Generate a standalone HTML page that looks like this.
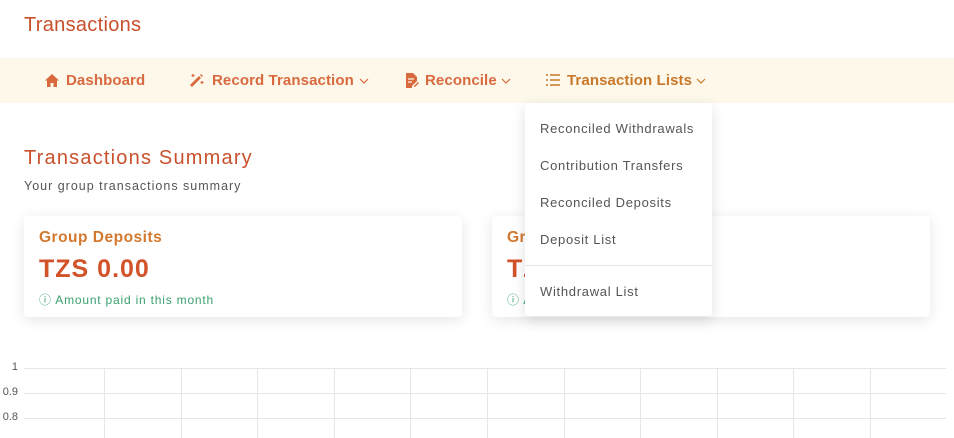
<!DOCTYPE html>
<html><head><meta charset="utf-8"><style>
*{margin:0;padding:0;box-sizing:border-box}
body{width:954px;height:438px;overflow:hidden;background:#fff;font-family:"Liberation Sans",sans-serif;position:relative}
.a{position:absolute}
.title{left:24px;top:14px;font-size:20px;color:#c9502c;letter-spacing:0.3px}
.nav{left:0;top:58px;width:954px;height:45px;background:#fdf8ea}
.ni{top:72px;font-size:15px;font-weight:bold;color:#d9693f;white-space:nowrap;letter-spacing:0.1px}
.ic{position:absolute;top:73px}
.chev{position:absolute;top:78px}
.card{background:#fff;border-radius:4px;box-shadow:0 3px 14px rgba(0,0,0,.1);height:101px;top:216px}
.ct{font-size:15.5px;font-weight:bold;color:#d2782f;letter-spacing:0.5px}
.cv{font-size:25px;font-weight:bold;color:#d2522a;letter-spacing:1px}
.cn{font-size:12px;color:#3aa06e;letter-spacing:0.8px}
.dd{left:525px;top:103px;width:187px;height:213px;background:#fff;box-shadow:0 4px 14px rgba(0,0,0,.12);border-radius:3px}
.di{left:15px;font-size:13px;color:#555;letter-spacing:0.7px}
.hl{height:1px;background:#e6e6e6}
.vl{width:1px;background:#e6e6e6;top:368px;height:70px}
.yl{font-size:11px;color:#555;left:0;width:18px;text-align:right}
</style></head><body>
<div class="a title">Transactions</div>
<div class="a nav"></div>
<svg class="ic" style="left:45px;top:74px" width="14" height="13" viewBox="0 0 14 13"><path d="M7 0L0 6.5h2V13h3.5V9h3v4H12V6.5h2z" fill="#d9693f"/></svg>
<div class="a ni" style="left:66px">Dashboard</div>
<svg class="ic" style="left:189px" width="16" height="15" viewBox="0 0 16 15"><path d="M3 14L12 5l-2-2-9 9z" fill="#d9693f"/><path d="M11 2l2 2 1-1-2-2z" fill="#d9693f"/><path d="M4 1v3M2.5 2.5h3M13 8v3M11.5 9.5h3" stroke="#d9693f" stroke-width="1.2"/></svg>
<div class="a ni" style="left:212px">Record Transaction</div>
<svg class="chev" style="left:359px" width="10" height="6" viewBox="0 0 10 6"><path d="M1 1l4 4 4-4" stroke="#d9693f" fill="none" stroke-width="1.2"/></svg>
<svg class="ic" style="left:405px" width="14" height="15" viewBox="0 0 14 15"><path d="M1 0h7l4 4v4l-5 5v2H1z" fill="#d9693f"/><path d="M3 6h6M3 9h4" stroke="#fdf8ea" stroke-width="1.2"/><path d="M9 13l4-4 1 1-4 4H9z" fill="#d9693f"/></svg>
<div class="a ni" style="left:425px">Reconcile</div>
<svg class="chev" style="left:501px" width="10" height="6" viewBox="0 0 10 6"><path d="M1 1l4 4 4-4" stroke="#d9693f" fill="none" stroke-width="1.2"/></svg>
<svg class="ic" style="left:546px;top:74px" width="14" height="12" viewBox="0 0 14 12"><path d="M0 1h2M0 6h2M0 11h2M4 1h10M4 6h10M4 11h10" stroke="#c9782a" stroke-width="1.4"/></svg>
<div class="a ni" style="left:567px;color:#c9782a">Transaction Lists</div>
<svg class="chev" style="left:696px" width="10" height="6" viewBox="0 0 10 6"><path d="M1 1l4 4 4-4" stroke="#c9782a" fill="none" stroke-width="1.2"/></svg>
<div class="a" style="left:24px;top:147px;font-size:20px;color:#c9502c;letter-spacing:1.2px">Transactions Summary</div>
<div class="a" style="left:24px;top:179px;font-size:12.5px;color:#555;letter-spacing:1px">Your group transactions summary</div>
<div class="a card" style="left:24px;width:438px">
 <div class="a ct" style="left:15px;top:13px">Group Deposits</div>
 <div class="a cv" style="left:15px;top:39px">TZS 0.00</div>
 <div class="a cn" style="left:15px;top:75px">&#9432; Amount paid in this month</div>
</div>
<div class="a card" style="left:492px;width:438px">
 <div class="a ct" style="left:15px;top:13px">Group Withdrawals</div>
 <div class="a cv" style="left:15px;top:39px">TZS 0.00</div>
 <div class="a cn" style="left:15px;top:75px">&#9432; Amount paid in this month</div>
</div>
<div class="a dd">
 <div class="a di" style="top:18px">Reconciled Withdrawals</div>
 <div class="a di" style="top:55px">Contribution Transfers</div>
 <div class="a di" style="top:92px">Reconciled Deposits</div>
 <div class="a di" style="top:129px">Deposit List</div>
 <div class="a hl" style="left:0;top:162px;width:187px"></div>
 <div class="a di" style="top:181px">Withdrawal List</div>
</div>
<div class="a hl" style="left:24px;top:368px;width:922px"></div>
<div class="a hl" style="left:24px;top:393px;width:922px"></div>
<div class="a hl" style="left:24px;top:418px;width:922px"></div>
<div class="a yl" style="top:361px">1</div>
<div class="a yl" style="top:386px">0.9</div>
<div class="a yl" style="top:411px">0.8</div>
<div class="a vl" style="left:104px"></div><div class="a vl" style="left:181px"></div>
<div class="a vl" style="left:257px"></div><div class="a vl" style="left:334px"></div>
<div class="a vl" style="left:410px"></div><div class="a vl" style="left:487px"></div>
<div class="a vl" style="left:564px"></div><div class="a vl" style="left:640px"></div>
<div class="a vl" style="left:717px"></div><div class="a vl" style="left:793px"></div>
<div class="a vl" style="left:870px"></div>
</body></html>
